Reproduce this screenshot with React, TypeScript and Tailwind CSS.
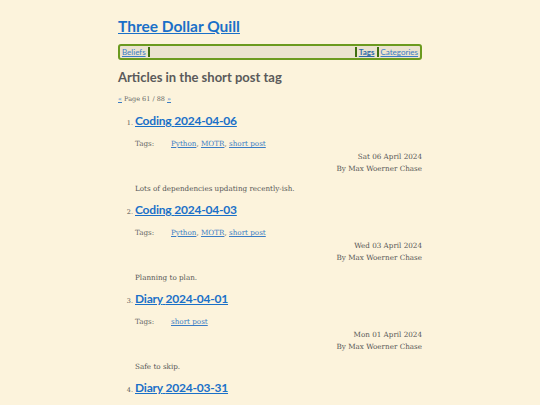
import React from "react";

const head = "font-['Lato','Open_Sans',sans-serif]";
const body = "font-['DejaVu_Serif','Liberation_Serif',serif]";

type Post = {
  kind: string;
  date: string;
  tags: string[];
  when: string;
  summary: string;
};

const posts: Post[] = [
  {
    kind: "Coding",
    date: "2024-04-06",
    tags: ["Python", "MOTR", "short post"],
    when: "Sat 06 April 2024",
    summary: "Lots of dependencies updating recently-ish.",
  },
  {
    kind: "Coding",
    date: "2024-04-03",
    tags: ["Python", "MOTR", "short post"],
    when: "Wed 03 April 2024",
    summary: "Planning to plan.",
  },
  {
    kind: "Diary",
    date: "2024-04-01",
    tags: ["short post"],
    when: "Mon 01 April 2024",
    summary: "Safe to skip.",
  },
  {
    kind: "Diary",
    date: "2024-03-31",
    tags: ["short post"],
    when: "Sun 31 March 2024",
    summary: "",
  },
];

function PostItem({ post, n }: { post: Post; n: number }) {
  return (
    <li className="flex flex-col mb-[6px]">
      <div className="flex items-baseline gap-[2px] h-[23px]">
        <span className={`${body} text-[6.5px] text-[#555] w-[15px] text-right shrink-0`}>{n}.</span>
        <a href="#" className={`${head} text-[12px] tracking-[-0.2px] font-bold text-[#1a70c8] underline`}>
          {post.kind} {post.date}
        </a>
      </div>
      <div className={`${body} pl-[17px] text-[7.2px] text-[#666] flex h-[13px] mt-[3px] items-center`}>
        <span className="w-[36px]">Tags:</span>
        <span>
          {post.tags.map((t, i) => (
            <span key={t}>
              <a href="#" className="text-[#3a7cc4] underline">{t}</a>
              {i < post.tags.length - 1 ? ", " : ""}
            </span>
          ))}
        </span>
      </div>
      <div className={`${body} text-[7.2px] text-[#555] text-right leading-[12px]`}>
        <div>{post.when}</div>
        <div>By Max Woerner Chase</div>
      </div>
      <p className={`${body} pl-[17px] text-[7.2px] text-[#555] mt-[7px] h-[13px] leading-[13px]`}>
        {post.summary}
      </p>
    </li>
  );
}

export default function App() {
  return (
    <div className="h-[405px] overflow-hidden bg-[#fcf3dc] flex justify-center">
      <div className="w-[304px] pt-[14px] flex flex-col">
        <a href="#" className={`${head} text-[15.5px] font-bold text-[#1a70c8] underline leading-[24px]`}>
          Three Dollar Quill
        </a>
        <nav className={`${head} mt-[6px] h-[16px] border-2 border-[#6b9a1f] rounded-[3px] bg-[#ebe3cf] flex items-stretch text-[8px]`}>
          <a href="#" className="px-[2px] flex items-center text-[#3a7cc4] underline">Beliefs</a>
          <span className="w-[2px] bg-[#3f6e10] my-[1px]" />
          <span className="flex-1" />
          <span className="w-[2px] bg-[#3f6e10] my-[1px]" />
          <a href="#" className="px-[2px] flex items-center text-[#2d6aa8] font-bold underline">Tags</a>
          <span className="w-[2px] bg-[#3f6e10] my-[1px]" />
          <a href="#" className="px-[2px] flex items-center text-[#3a7cc4] underline">Categories</a>
        </nav>
        <h1 className={`${head} mt-[8px] text-[13px] font-bold text-[#5a5a5a] leading-[18px]`}>
          Articles in the short post tag
        </h1>
        <div className={`${body} mt-[8px] text-[6.5px] text-[#666] leading-[10px]`}>
          <a href="#" className="text-[#3a7cc4] underline">«</a> Page 61 / 88{" "}
          <a href="#" className="text-[#3a7cc4] underline">»</a>
        </div>
        <ol className="mt-[8px] flex flex-col">
          {posts.map((p, i) => (
            <PostItem key={p.date} post={p} n={i + 1} />
          ))}
        </ol>
      </div>
    </div>
  );
}
